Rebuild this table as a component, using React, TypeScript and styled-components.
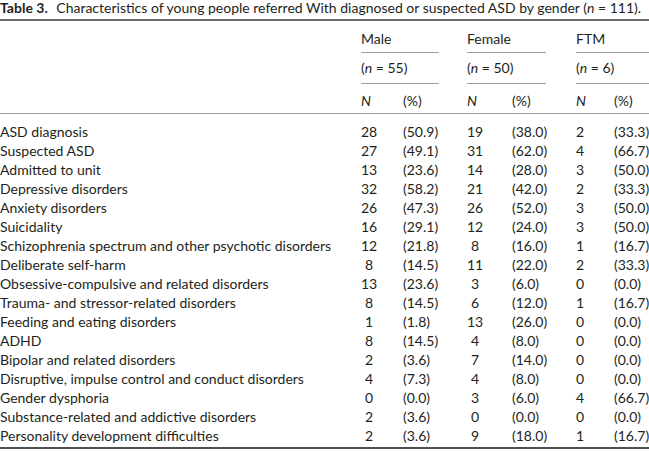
import React from 'react';
import styled, { createGlobalStyle } from 'styled-components';

const GlobalStyle = createGlobalStyle`
  html, body {
    margin: 0;
    padding: 0;
    background: #ffffff;
  }
  body {
    font-family: Lato, "Open Sans", sans-serif;
    color: #231f20;
  }
`;

// label | Male N | Male % | Female N | Female % | FTM N | FTM %
const COLUMNS = '361px 42px 64px 45px 64px 38px 35px';

const Page = styled.div`
  width: 649px;
  height: 451px;
  overflow: hidden;
`;

const Caption = styled.div`
  font-size: 14px;
  line-height: 15px;
  height: 19px;
  white-space: nowrap;
`;

const CaptionLabel = styled.span`
  font-weight: 700;
  margin-right: 5px;
`;

const Italic = styled.i`
  font-style: italic;
`;

const Grid = styled.div`
  display: grid;
  grid-template-columns: ${COLUMNS};
  border-top: 2px solid #6e6e6e;
  border-bottom: 2px solid #505050;
  font-size: 14px;
  line-height: 19px;
`;

const HeadBlank = styled.div<{ $h: number; $rule?: boolean }>`
  height: ${({ $h }) => $h}px;
  box-sizing: border-box;
  border-bottom: ${({ $rule }) => ($rule ? '1px solid #9c9c9c' : 'none')};
`;

const GroupCell = styled.div<{ $h: number; $pt: number; $gap: number }>`
  grid-column: span 2;
  height: ${({ $h }) => $h}px;
  padding-top: ${({ $pt }) => $pt}px;
  margin-right: ${({ $gap }) => $gap}px;
  box-sizing: border-box;
  border-bottom: 1px solid #9c9c9c;
  white-space: nowrap;
`;

const ColHead = styled.div`
  height: 30px;
  padding-top: 7px;
  box-sizing: border-box;
  border-bottom: 1px solid #9c9c9c;
`;

const Gap = styled.div<{ $h: number }>`
  grid-column: 1 / -1;
  height: ${({ $h }) => $h}px;
`;

const Label = styled.div`
  height: 19px;
  white-space: nowrap;
`;

const NCell = styled.div`
  height: 19px;
`;

const NValue = styled.span<{ $w: number }>`
  display: inline-block;
  width: ${({ $w }) => $w}px;
  text-align: center;
`;

const PctCell = styled.div`
  height: 19px;
  white-space: nowrap;
`;

type Row = [string, number, string, number, string, number, string];

const rows: Row[] = [
  ['ASD diagnosis', 28, '(50.9)', 19, '(38.0)', 2, '(33.3)'],
  ['Suspected ASD', 27, '(49.1)', 31, '(62.0)', 4, '(66.7)'],
  ['Admitted to unit', 13, '(23.6)', 14, '(28.0)', 3, '(50.0)'],
  ['Depressive disorders', 32, '(58.2)', 21, '(42.0)', 2, '(33.3)'],
  ['Anxiety disorders', 26, '(47.3)', 26, '(52.0)', 3, '(50.0)'],
  ['Suicidality', 16, '(29.1)', 12, '(24.0)', 3, '(50.0)'],
  ['Schizophrenia spectrum and other psychotic disorders', 12, '(21.8)', 8, '(16.0)', 1, '(16.7)'],
  ['Deliberate self-harm', 8, '(14.5)', 11, '(22.0)', 2, '(33.3)'],
  ['Obsessive-compulsive and related disorders', 13, '(23.6)', 3, '(6.0)', 0, '(0.0)'],
  ['Trauma- and stressor-related disorders', 8, '(14.5)', 6, '(12.0)', 1, '(16.7)'],
  ['Feeding and eating disorders', 1, '(1.8)', 13, '(26.0)', 0, '(0.0)'],
  ['ADHD', 8, '(14.5)', 4, '(8.0)', 0, '(0.0)'],
  ['Bipolar and related disorders', 2, '(3.6)', 7, '(14.0)', 0, '(0.0)'],
  ['Disruptive, impulse control and conduct disorders', 4, '(7.3)', 4, '(8.0)', 0, '(0.0)'],
  ['Gender dysphoria', 0, '(0.0)', 3, '(6.0)', 4, '(66.7)'],
  ['Substance-related and addictive disorders', 2, '(3.6)', 0, '(0.0)', 0, '(0.0)'],
  ['Personality development difficulties', 2, '(3.6)', 9, '(18.0)', 1, '(16.7)'],
];

const groups = [
  { name: 'Male', n: 55, gap: 28, nWidth: 16 },
  { name: 'Female', n: 50, gap: 30, nWidth: 16 },
  { name: 'FTM', n: 6, gap: 0, nWidth: 8 },
];

const App: React.FC = () => {
  return (
    <Page>
      <GlobalStyle />
      <Caption>
        <CaptionLabel>Table 3.</CaptionLabel> Characteristics of young people referred With diagnosed or
        suspected ASD by gender (<Italic>n</Italic> = 111).
      </Caption>
      <Grid>
        {/* group names */}
        <HeadBlank $h={32} />
        {groups.map(g => (
          <GroupCell key={g.name} $h={32} $pt={8} $gap={g.gap}>
            {g.name}
          </GroupCell>
        ))}

        {/* group sizes */}
        <HeadBlank $h={31} />
        {groups.map(g => (
          <GroupCell key={g.name} $h={31} $pt={5} $gap={g.gap}>
            (<Italic>n</Italic> = {g.n})
          </GroupCell>
        ))}

        {/* column labels */}
        <HeadBlank $h={30} $rule />
        {groups.map(g => (
          <React.Fragment key={g.name}>
            <ColHead>
              <Italic>N</Italic>
            </ColHead>
            <ColHead>(%)</ColHead>
          </React.Fragment>
        ))}

        <Gap $h={8} />
        {rows.map(row => (
          <React.Fragment key={row[0]}>
            <Label>{row[0]}</Label>
            {groups.map((g, i) => (
              <React.Fragment key={g.name}>
                <NCell>
                  <NValue $w={g.nWidth}>{row[1 + i * 2]}</NValue>
                </NCell>
                <PctCell>{row[2 + i * 2]}</PctCell>
              </React.Fragment>
            ))}
          </React.Fragment>
        ))}
        <Gap $h={2} />
      </Grid>
    </Page>
  );
};

export default App;
